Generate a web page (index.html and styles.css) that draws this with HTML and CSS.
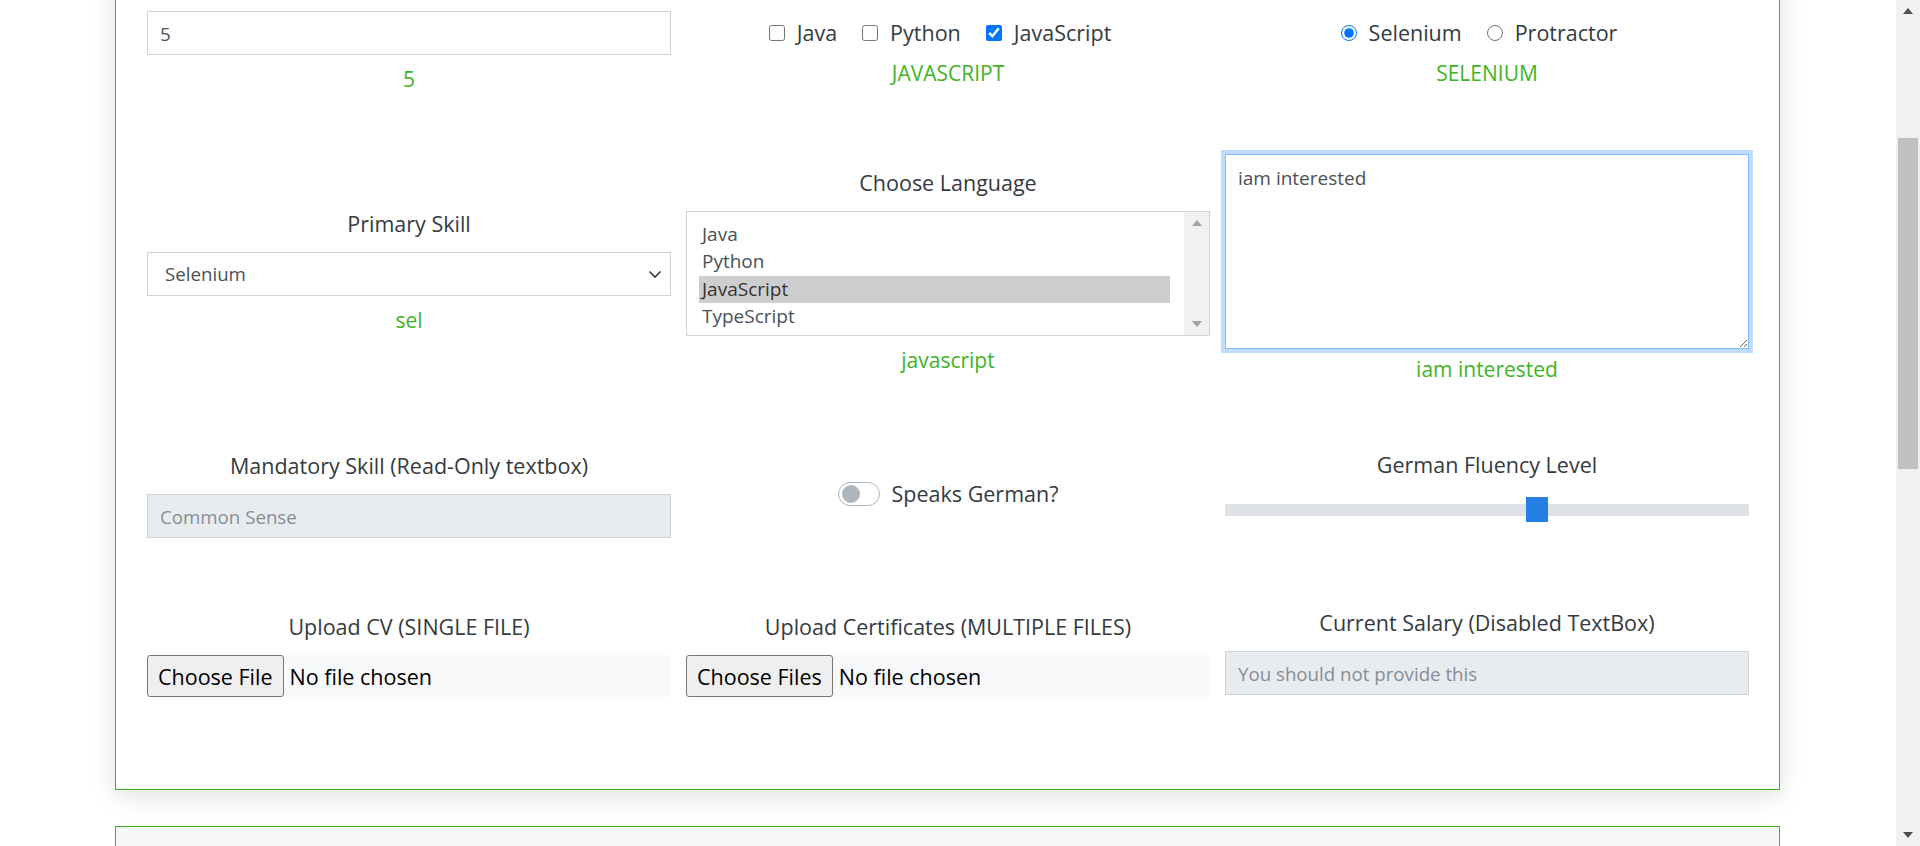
FILE: index.html
```html
<!DOCTYPE html>
<html lang="en">
<head>
<meta charset="utf-8">
<title>Form</title>
<link rel="stylesheet" href="styles.css">
</head>
<body>
<div class="viewport">
  <main class="page">
    <section class="card">
      <div class="row r1">
        <div class="col">
          <input class="form-control" type="text" value="5">
          <div class="out">5</div>
        </div>
        <div class="col">
          <div class="checks">
            <label class="check"><input type="checkbox"> Java</label>
            <label class="check"><input type="checkbox"> Python</label>
            <label class="check"><input type="checkbox" checked> JavaScript</label>
          </div>
          <div class="out">JAVASCRIPT</div>
        </div>
        <div class="col">
          <div class="checks">
            <label class="check"><input type="radio" name="tool" checked> Selenium</label>
            <label class="check"><input type="radio" name="tool"> Protractor</label>
          </div>
          <div class="out">SELENIUM</div>
        </div>
      </div>

      <div class="row r2">
        <div class="col">
          <label class="lbl">Primary Skill</label>
          <div class="select-wrap">
            <select class="form-control select">
              <option>Selenium</option>
            </select>
            <svg class="chev" width="14" height="10" viewBox="0 0 14 10"><path d="M1.5 2.5 L7 8 L12.5 2.5" fill="none" stroke="#343a40" stroke-width="1.6"/></svg>
          </div>
          <div class="out">sel</div>
        </div>
        <div class="col">
          <label class="lbl">Choose Language</label>
          <div class="listbox" role="listbox">
            <div class="opts">
              <div class="opt">Java</div>
              <div class="opt">Python</div>
              <div class="opt sel">JavaScript</div>
              <div class="opt">TypeScript</div>
            </div>
            <div class="lb-scroll">
              <svg width="10" height="6" viewBox="0 0 10 6"><path d="M0 6 L5 0 L10 6 Z" fill="#a3a3a3"/></svg>
              <svg width="10" height="6" viewBox="0 0 10 6"><path d="M0 0 L5 6 L10 0 Z" fill="#a3a3a3"/></svg>
            </div>
          </div>
          <div class="out">javascript</div>
        </div>
        <div class="col">
          <textarea class="form-control area focused">iam interested</textarea>
          <div class="out out-area">iam interested</div>
        </div>
      </div>

      <div class="row r3">
        <div class="col">
          <label class="lbl">Mandatory Skill (Read-Only textbox)</label>
          <input class="form-control ro" type="text" value="Common Sense" readonly>
        </div>
        <div class="col">
          <label class="switch"><span class="track"><span class="knob"></span></span>Speaks German?</label>
        </div>
        <div class="col">
          <label class="lbl">German Fluency Level</label>
          <input class="range" type="range" min="0" max="100" value="60">
        </div>
      </div>

      <div class="row r4">
        <div class="col shift">
          <label class="lbl">Upload CV (SINGLE FILE)</label>
          <div class="file"><span class="fbtn">Choose File</span><span class="ftxt">No file chosen</span></div>
        </div>
        <div class="col shift">
          <label class="lbl">Upload Certificates (MULTIPLE FILES)</label>
          <div class="file"><span class="fbtn">Choose Files</span><span class="ftxt">No file chosen</span></div>
        </div>
        <div class="col">
          <label class="lbl">Current Salary (Disabled TextBox)</label>
          <input class="form-control ro dis" type="text" placeholder="You should not provide this" disabled>
        </div>
      </div>
    </section>
    <section class="card next"></section>
  </main>
  <div class="vscroll">
    <div class="sb-btn"><svg width="10" height="6" viewBox="0 0 10 6"><path d="M0 6 L5 0 L10 6 Z" fill="#505050"/></svg></div>
    <div class="sb-track"><div class="sb-thumb"></div></div>
    <div class="sb-btn"><svg width="10" height="6" viewBox="0 0 10 6"><path d="M0 0 L5 6 L10 0 Z" fill="#505050"/></svg></div>
  </div>
</div>
</body>
</html>
```

FILE: styles.css
```css
* { box-sizing: border-box; }
html, body { margin: 0; padding: 0; height: 100%; overflow: hidden; background: #fff; }
body {
  font-family: "Open Sans", "Noto Sans", sans-serif;
  font-size: 21px;
  color: #343a40;
}
.viewport { display: flex; height: 846px; }
.page { flex: 1; overflow: hidden; }

.card {
  width: 1665px;
  margin: -30px 0 0 115px;
  border: 1px solid #3fb424;
  background: #fff;
  padding: 40px 30px 92px 31px;
  box-shadow: 0 6px 24px rgba(0,0,0,0.12);
}
.card.next {
  margin-top: 36px;
  height: 100px;
  padding: 0;
  background: #f6f6f6;
  box-shadow: none;
}

.row {
  display: grid;
  grid-template-columns: repeat(3, 1fr);
  column-gap: 15px;
  align-items: center;
}
.r2 { margin-top: 60px; }
.r3 { margin-top: 61px; }
.r4 { margin-top: 66px; }

.col { display: flex; flex-direction: column; text-align: center; }
.col.shift { padding-top: 6px; }

.out { color: #3fb424; line-height: 30px; margin-top: 9px; }
.out.out-area { margin-top: 5px; margin-bottom: 4px; }

.lbl { display: block; font-size: 21.5px; line-height: 32px; margin-bottom: 12px; }

.form-control {
  display: block;
  width: 100%;
  height: 44px;
  font-family: inherit;
  font-size: 18.7px;
  color: #495057;
  padding: 0 12px;
  border: 1px solid #ced4da;
  border-radius: 0;
  background: #fff;
  outline: none;
}

.checks {
  display: flex; justify-content: center; gap: 25px;
  padding-right: 16px;
  line-height: 32px; font-size: 21.5px;
}
.check { display: inline-flex; align-items: center; gap: 12px; }
.check input { width: 16px; height: 16px; margin: 0; accent-color: #0075ff; }

.select-wrap { position: relative; }
.select { appearance: none; -webkit-appearance: none; text-align: left; padding-left: 17px; }
.chev { position: absolute; right: 9px; top: 17px; }

.listbox {
  display: flex;
  height: 125px;
  border: 1px solid #ced4da;
  text-align: left;
  font-size: 19px;
  color: #495057;
}
.opts { flex: 1; padding: 9px 14px 0 12px; }
.opt { height: 27.4px; line-height: 27px; padding-left: 3px; }
.opt.sel { background: #cecece; color: #333; }
.lb-scroll {
  width: 25px;
  background: #f1f1f1;
  display: flex;
  flex-direction: column;
  justify-content: space-between;
  align-items: center;
  padding: 8px 0 8px;
}

.area {
  height: 195px;
  padding: 9px 12px;
  resize: both;
  line-height: 1.5;
  font-size: 19px;
}
.area.focused {
  border-color: #80bdff;
  box-shadow: 0 0 0 4px rgba(0,123,255,0.25);
}

.ro { background: #e9ecef; color: #868e96; }
.dis::placeholder { color: #868e96; }

.switch { display: inline-flex; align-items: center; justify-content: center; gap: 12px; line-height: 32px; font-size: 21.5px; }
.track {
  width: 42px; height: 24px;
  border: 1px solid #adb5bd;
  border-radius: 12px;
  display: flex; align-items: center; padding-left: 3px;
}
.knob { width: 18px; height: 18px; border-radius: 50%; background: #adb5bd; }

.range {
  -webkit-appearance: none; appearance: none;
  width: 100%; height: 34px; margin: 0 0 12px; background: transparent;
}
.range::-webkit-slider-runnable-track { height: 12px; background: #dee2e6; }
.range::-webkit-slider-thumb {
  -webkit-appearance: none; appearance: none;
  width: 22px; height: 25px; background: #2680e3; margin-top: -7px; border: none;
}

.file {
  display: flex; align-items: center;
  height: 42px;
  background: #f8f9fa;
  text-align: left;
  color: #000;
  font-size: 21.5px;
}
.fbtn {
  height: 42px;
  display: flex; align-items: center;
  padding: 0 10px;
  background: #efefef;
  border: 1px solid #767676;
  border-radius: 3px;
}
.ftxt { margin-left: 6px; }

.vscroll { width: 24px; background: #f1f1f1; display: flex; flex-direction: column; }
.sb-btn { height: 22px; display: flex; align-items: center; justify-content: center; }
.sb-track { flex: 1; padding: 116px 2px 0 2px; }
.sb-thumb { height: 331px; background: #c1c1c1; }
```
